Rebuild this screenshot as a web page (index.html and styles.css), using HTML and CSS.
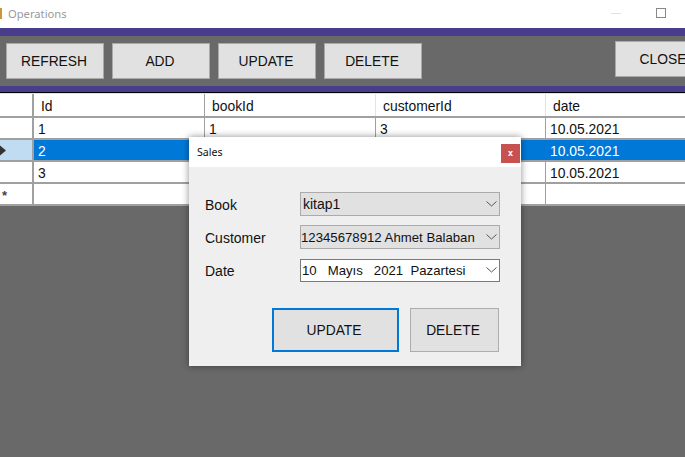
FILE: index.html
```html
<!DOCTYPE html>
<html lang="tr">
<head>
<meta charset="utf-8">
<title>Operations</title>
<link rel="stylesheet" href="styles.css">
</head>
<body>
<div class="window">
  <header class="titlebar">
    <span class="app-icon"></span>
    <span class="app-title">Operations</span>
    <span class="win-min"></span>
    <span class="win-max"></span>
  </header>
  <div class="toolbar">
    <button class="btn">REFRESH</button>
    <button class="btn">ADD</button>
    <button class="btn">UPDATE</button>
    <button class="btn">DELETE</button>
    <button class="btn btn-close">CLOSE</button>
  </div>
  <div class="grid">
    <div class="row head">
      <div class="cell rh"></div><div class="cell c1">Id</div><div class="cell c2">bookId</div><div class="cell c3">customerId</div><div class="cell c4">date</div>
    </div>
    <div class="row">
      <div class="cell rh"></div><div class="cell c1">1</div><div class="cell c2">1</div><div class="cell c3">3</div><div class="cell c4">10.05.2021</div>
    </div>
    <div class="row selected">
      <div class="cell rh"><svg class="marker" width="7" height="11" viewBox="0 0 7 11"><path d="M0 0.5 L6 5.5 L0 10.5 Z" fill="#333"/></svg></div><div class="cell c1">2</div><div class="cell c2"></div><div class="cell c3"></div><div class="cell c4">10.05.2021</div>
    </div>
    <div class="row">
      <div class="cell rh"></div><div class="cell c1">3</div><div class="cell c2"></div><div class="cell c3"></div><div class="cell c4">10.05.2021</div>
    </div>
    <div class="row">
      <div class="cell rh star">*</div><div class="cell c1"></div><div class="cell c2"></div><div class="cell c3"></div><div class="cell c4"></div>
    </div>
  </div>
</div>

<section class="dialog">
  <div class="dlg-title">
    <span>Sales</span>
    <span class="dlg-x">x</span>
  </div>
  <div class="dlg-body">
    <div class="field">
      <label>Book</label>
      <div class="select"><span>kitap1</span><svg class="chev" width="11" height="6" viewBox="0 0 11 6"><path d="M0.5 0.5 L5.5 5 L10.5 0.5" fill="none" stroke="#555" stroke-width="1"/></svg></div>
    </div>
    <div class="field">
      <label>Customer</label>
      <div class="select compact"><span>12345678912 Ahmet Balaban</span><svg class="chev" width="11" height="6" viewBox="0 0 11 6"><path d="M0.5 0.5 L5.5 5 L10.5 0.5" fill="none" stroke="#555" stroke-width="1"/></svg></div>
    </div>
    <div class="field">
      <label>Date</label>
      <div class="select compact date"><span class="pre">10   Mayıs   2021  Pazartesi</span><svg class="chev" width="11" height="6" viewBox="0 0 11 6"><path d="M0.5 0.5 L5.5 5 L10.5 0.5" fill="none" stroke="#555" stroke-width="1"/></svg></div>
    </div>
    <div class="dlg-actions">
      <button class="dbtn primary">UPDATE</button>
      <button class="dbtn">DELETE</button>
    </div>
  </div>
</section>
</body>
</html>
```

FILE: styles.css
```css
* { box-sizing: border-box; }
html, body { margin: 0; padding: 0; }
body {
  width: 685px;
  height: 457px;
  overflow: hidden;
  position: relative;
  background: #696969;
  font-family: "Liberation Sans", Arial, sans-serif;
  font-size: 14px;
  color: #111;
}
.window { display: flex; flex-direction: column; }

.titlebar {
  height: 28px;
  background: #fff;
  display: flex;
  align-items: center;
  padding-bottom: 2px;
}
.app-icon {
  width: 2px;
  height: 11px;
  background: #c8963c;
  margin-right: 6px;
}
.app-title {
  font-family: "Noto Sans", "Open Sans", sans-serif;
  font-size: 11.2px;
  color: #9a9a9a;
}
.win-min {
  width: 10px;
  height: 1px;
  background: #e0e0e0;
  margin-left: auto;
  margin-right: 35px;
}
.win-max {
  width: 10px;
  height: 10px;
  border: 1px solid #888;
  margin-right: 19px;
}

.toolbar {
  height: 64px;
  background: #696969;
  border-top: 8px solid #483d8b;
  border-bottom: 6px solid #483d8b;
  display: flex;
  align-items: flex-start;
  gap: 8px;
  padding: 7px 0 0 6px;
}
.btn {
  width: 98px;
  height: 36px;
  padding: 0 2px 0 0;
  background: #e1e1e1;
  border: 1px solid #a9a9a9;
  font: 13.8px "Liberation Sans", Arial, sans-serif;
  color: #111;
}
.btn-close {
  margin-left: auto;
  margin-right: -28px;
  margin-top: -2px;
  flex: none;
}

.grid { display: flex; flex-direction: column; background: #fff; border-top: 1px solid #000; }
.row { display: flex; height: 22px; border-bottom: 2px solid #a0a0a0; }
.row.head { height: 25px; background: #fff; border-top: 1px solid #e3e3e3; }
.cell {
  padding: 0 0 0 4px;
  line-height: 23px;
  white-space: nowrap;
  border-right: 1px solid #a0a0a0;
  overflow: hidden;
  height: 20px;
  font-size: 13.9px;
  color: #111;
}
.head .cell { height: 22px; line-height: 25px; padding-left: 7px; border-right-color: #e3e3e3; }
.head .rh, .head .c1 { border-right-color: #a0a0a0; }
.rh { width: 34px; padding: 0; flex: none; border-right-width: 2px; }
.c1 { width: 171px; }
.c2 { width: 171px; }
.c3 { width: 170px; }
.c4 { width: 139px; border-right: 0; }
.selected .cell { background: #0078d7; color: #fff; border-right-color: #0078d7; }
.selected .rh { background: #bfdcf3; border-right-color: #a0a0a0; display: flex; align-items: center; }
.star { font-size: 13px; font-weight: bold; color: #444; padding-left: 2px; line-height: 24px; }

.dialog {
  position: absolute;
  left: 189px;
  top: 137px;
  width: 332px;
  height: 229px;
  background: #efefef;
  box-shadow: 0 0 7px rgba(0, 0, 0, 0.45);
  display: flex;
  flex-direction: column;
}
.dlg-title {
  height: 30px;
  background: #fff;
  display: flex;
  align-items: center;
  justify-content: space-between;
  padding: 0 1px 0 8px;
  font-family: "Noto Sans", "Open Sans", sans-serif;
  font-size: 10.6px;
  color: #111;
}
.dlg-x {
  width: 19px;
  height: 19px;
  margin-top: 2px;
  background: #c75050;
  color: #fff;
  font: bold 9px/18px "DejaVu Sans Mono", monospace;
  text-align: center;
}
.dlg-body { padding: 25px 21px 0 16px; display: flex; flex-direction: column; }
.field { display: flex; align-items: center; height: 24px; margin-bottom: 9px; }
.field label { width: 95px; padding-top: 2px; font-size: 14px; color: #111; }
.select {
  width: 200px;
  height: 24px;
  background: #e1e1e1;
  border: 1px solid #ababab;
  display: flex;
  align-items: center;
  justify-content: space-between;
  padding: 0 2px;
  font-size: 14px;
  color: #111;
  white-space: nowrap;
  overflow: hidden;
}
.select.compact { font-size: 13.2px; padding-left: 0; }
.select.date { background: #fff; border-color: #7a7a7a; height: 23px; padding-left: 1px; }
.pre { white-space: pre; }
.chev { flex: none; }
.dlg-actions { display: flex; gap: 11px; margin-top: 17px; margin-left: 67px; }
.dbtn {
  width: 89px;
  height: 44px;
  padding: 0 3px 0 0;
  background: #e1e1e1;
  border: 1px solid #adadad;
  font: 13.8px "Liberation Sans", Arial, sans-serif;
  color: #111;
}
.dbtn.primary { width: 127px; border: 2px solid #0078d7; }
```
